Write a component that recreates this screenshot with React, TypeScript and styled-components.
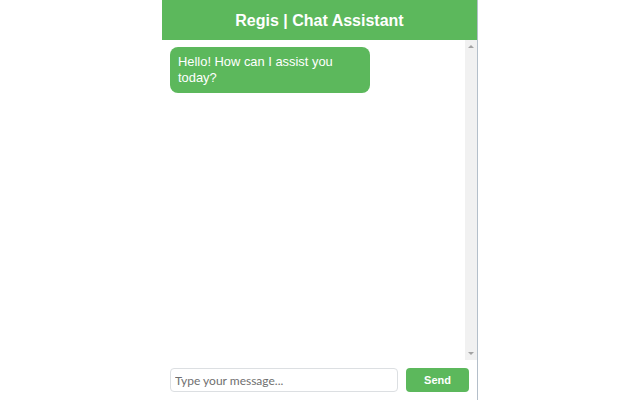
import styled, { createGlobalStyle } from "styled-components";

const GlobalStyle = createGlobalStyle`
  html, body {
    margin: 0;
    padding: 0;
    background: #ffffff;
    font-family: "Liberation Sans", Arial, sans-serif;
  }
`;

const green = "#5cb85c";

const Panel = styled.div`
  width: 315px;
  height: 400px;
  margin: 0 auto;
  display: flex;
  flex-direction: column;
  border-right: 1px solid #b4bfca;
  box-sizing: content-box;
`;

const Header = styled.header`
  height: 40px;
  flex: none;
  background: ${green};
  color: #ffffff;
  display: flex;
  align-items: center;
  justify-content: center;
  font-size: 16px;
  font-weight: bold;
  padding-top: 1px;
  box-sizing: border-box;
`;

const Body = styled.div`
  flex: 1;
  display: flex;
  min-height: 0;
`;

const Messages = styled.div`
  flex: 1;
  padding: 7px 8px;
  display: flex;
  flex-direction: column;
  align-items: flex-start;
`;

// classic scrollbar track with its two arrow buttons
const ScrollTrack = styled.div`
  width: 12px;
  flex: none;
  background: #f1f1f1;
  display: flex;
  flex-direction: column;
  justify-content: space-between;
  align-items: center;
`;

const Arrow = styled.span<{ $dir: "up" | "down" }>`
  width: 0;
  height: 0;
  margin: 5px 0;
  border-left: 3px solid transparent;
  border-right: 3px solid transparent;
  ${(p) =>
    p.$dir === "up"
      ? "border-bottom: 3px solid #a3a3a3;"
      : "border-top: 3px solid #a3a3a3;"}
`;

const Bubble = styled.div<{ $from: "bot" | "user" }>`
  max-width: 184px;
  padding: 7px 8px;
  border-radius: 8px;
  background: ${(p) => (p.$from === "bot" ? green : "#e9e9e9")};
  color: ${(p) => (p.$from === "bot" ? "#ffffff" : "#333333")};
  font-size: 12.9px;
  line-height: 16px;
  align-self: ${(p) => (p.$from === "bot" ? "flex-start" : "flex-end")};
`;

const InputRow = styled.form`
  flex: none;
  display: flex;
  gap: 8px;
  padding: 8px;
`;

const TextInput = styled.input`
  flex: 1;
  min-width: 0;
  height: 24px;
  box-sizing: border-box;
  border: 1px solid #dcdfe2;
  border-radius: 4px;
  padding: 0 4px;
  font-family: Lato, "Open Sans", sans-serif;
  font-size: 12px;
  outline: none;

  &::placeholder {
    color: #6f6f6f;
  }
`;

const SendButton = styled.button`
  width: 63px;
  height: 24px;
  border: none;
  border-radius: 4px;
  background: ${green};
  color: #ffffff;
  font-family: "Liberation Sans", Arial, sans-serif;
  font-weight: bold;
  font-size: 11px;
  cursor: pointer;
`;

export default function App() {
  return (
    <>
      <GlobalStyle />
      <Panel>
        <Header>Regis | Chat Assistant</Header>
        <Body>
          <Messages>
            <Bubble $from="bot">Hello! How can I assist you today?</Bubble>
          </Messages>
          <ScrollTrack>
            <Arrow $dir="up" />
            <Arrow $dir="down" />
          </ScrollTrack>
        </Body>
        <InputRow onSubmit={(e) => e.preventDefault()}>
          <TextInput type="text" placeholder="Type your message..." />
          <SendButton type="submit">Send</SendButton>
        </InputRow>
      </Panel>
    </>
  );
}
